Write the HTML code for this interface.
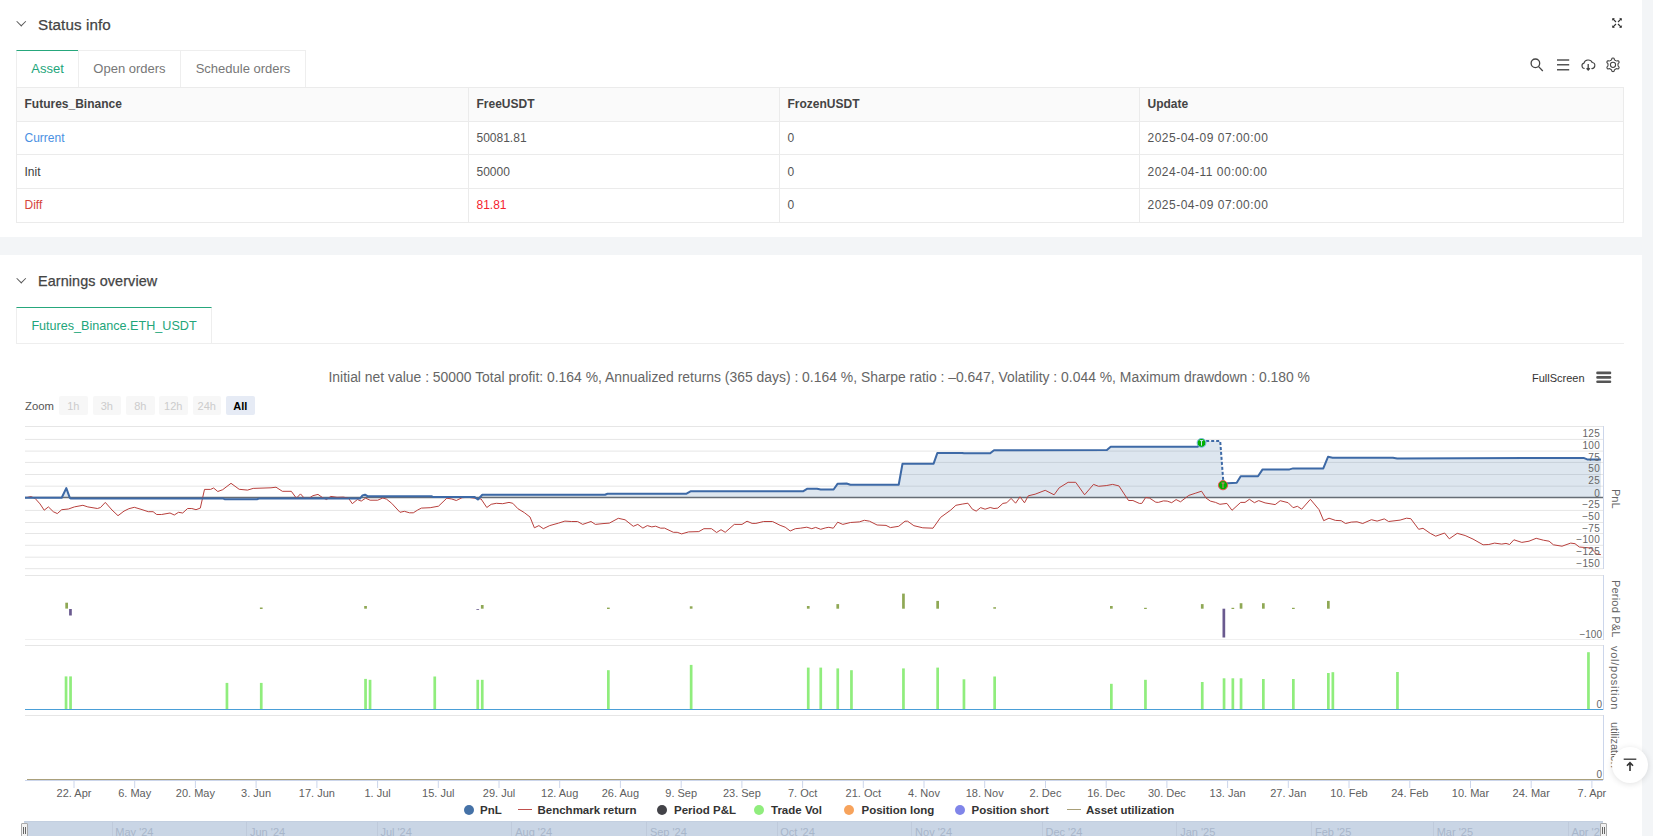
<!DOCTYPE html>
<html><head><meta charset="utf-8">
<style>
*{box-sizing:border-box;margin:0;padding:0}
html,body{width:1653px;height:836px;overflow:hidden;background:#fff;font-family:"Liberation Sans",sans-serif;position:relative}
.a{position:absolute;white-space:nowrap}
.strip{position:absolute;left:1642px;top:0;width:11px;height:836px;background:#f3f5f7}
.band{position:absolute;left:0;top:237px;width:1642px;height:18px;background:#f3f5f7}
.h{font-size:15.2px;color:#444;line-height:18px;letter-spacing:0.1px;-webkit-text-stroke:0.25px #444}
.chev{position:absolute;width:6.5px;height:6.5px;border-right:1.3px solid #555;border-bottom:1.3px solid #555;transform:rotate(45deg)}
.tab{position:absolute;top:50px;height:37px;border:1px solid #eee;border-bottom:none;font-size:13px;color:#777;text-align:center;line-height:36px}
.td{font-size:12px;line-height:14px}
.tab.on{border-top:1.5px solid #26a77c;padding-top:0.5px;color:#22a57a;line-height:34px}
table{position:absolute;left:16px;top:87px;width:1608px;border-collapse:collapse;font-size:12px;color:#555}
td,th{border:1px solid #ebebeb;height:34px;padding:0 0 0 8px;text-align:left;font-weight:normal}
th{background:#fafafa;font-weight:bold;color:#444}

.zb{position:absolute;top:396px;width:28.5px;height:19px;border-radius:2px;background:#f7f7f7;color:#ccc;font-size:11px;text-align:center;line-height:20px}
.zb.on{background:#e6ebf5;color:#000;font-weight:bold}
.rot{position:absolute;white-space:nowrap;font-size:11px;line-height:12px;color:#666;transform:rotate(90deg);transform-origin:0 0}
.lt{position:absolute;top:803px;font-size:11.5px;font-weight:bold;color:#333;line-height:14px;white-space:nowrap}
.dot{position:absolute;top:804.6px;width:10px;height:10px;border-radius:50%}
.ln{position:absolute;top:809px;width:14px;height:1.2px}
.navl{position:absolute;top:826px;font-size:11px;color:#a8b6ca;white-space:nowrap;line-height:13px}
.navs{position:absolute;top:822px;width:1px;height:14px;background:#bfcadb}
.hd{position:absolute;top:823px;width:7.5px;height:14px;background:#f2f2f2;border:1px solid #aaa;border-radius:1px}
.hd:before{content:"";position:absolute;left:1.5px;top:3px;width:1px;height:7px;background:#666;box-shadow:2px 0 0 #666}
</style></head><body>
<div class="strip"></div>
<div class="band"></div>

<!-- Section 1 -->
<div class="chev" style="left:17.5px;top:17.5px"></div>
<div class="a h" style="left:38px;top:16px">Status info</div>
<svg class="a" style="left:1608px;top:14px" width="18" height="18" viewBox="1608 14 18 18" fill="none" stroke="#333" stroke-width="1.1">
<path d="M1613 19L1616 22M1621 19L1618 22M1613 27L1616 24M1621 27L1618 24"/>
<path d="M1612.5 18.5h1.8l-1.8 1.8z M1621.5 18.5h-1.8l1.8 1.8z M1612.5 27.5h1.8l-1.8-1.8z M1621.5 27.5h-1.8l1.8-1.8z" fill="#333" stroke-width="0.6"/>
</svg>

<div class="tab on" style="left:16px;width:63px">Asset</div>
<div class="tab" style="left:78px;width:103px">Open orders</div>
<div class="tab" style="left:180px;width:126px">Schedule orders</div>

<svg class="a" style="left:1528px;top:55px" width="95" height="20" viewBox="1528 55 95 20" fill="none" stroke="#444" stroke-width="1.3">
<circle cx="1535.4" cy="63.3" r="4.3"/><path d="M1538.6 66.6L1542.8 71"/>
<path d="M1557 60h12.2M1557 64.8h12.2M1557 69.8h12.2" stroke="#555" stroke-width="1.4"/>
<path d="M1584.6 68.5a2.75 2.75 0 0 1 -0.6-5.4a4.3 3.9 0 0 1 8.2 -0.6a2.75 2.75 0 0 1 -0.8 6" stroke-width="1.15"/>
<path d="M1588.2 64v5.8M1586.6 68.2l1.6 1.8l1.6-1.8"/>
<path d="M1610.50 60.52C1610.87 60.31 1611.28 60.12 1611.54 59.76C1611.80 59.39 1611.68 58.55 1612.08 58.31C1612.48 58.07 1613.52 58.07 1613.92 58.31C1614.32 58.55 1614.20 59.39 1614.46 59.76C1614.72 60.12 1615.13 60.31 1615.50 60.52C1615.87 60.73 1616.23 60.99 1616.68 61.04C1617.13 61.08 1617.79 60.56 1618.20 60.79C1618.61 61.01 1619.13 61.91 1619.12 62.38C1619.11 62.84 1618.33 63.16 1618.14 63.57C1617.96 63.98 1618.00 64.42 1618.00 64.85C1618.00 65.28 1617.96 65.72 1618.14 66.13C1618.33 66.54 1619.11 66.86 1619.12 67.32C1619.13 67.79 1618.61 68.69 1618.20 68.91C1617.79 69.14 1617.13 68.62 1616.68 68.66C1616.23 68.71 1615.87 68.97 1615.50 69.18C1615.13 69.39 1614.72 69.58 1614.46 69.94C1614.20 70.31 1614.32 71.15 1613.92 71.39C1613.52 71.63 1612.48 71.63 1612.08 71.39C1611.68 71.15 1611.80 70.31 1611.54 69.94C1611.28 69.58 1610.87 69.39 1610.50 69.18C1610.13 68.97 1609.77 68.71 1609.32 68.66C1608.87 68.62 1608.21 69.14 1607.80 68.91C1607.39 68.69 1606.87 67.79 1606.88 67.32C1606.89 66.86 1607.67 66.54 1607.86 66.13C1608.04 65.72 1608.00 65.28 1608.00 64.85C1608.00 64.42 1608.04 63.98 1607.86 63.57C1607.67 63.16 1606.89 62.84 1606.88 62.38C1606.87 61.91 1607.39 61.01 1607.80 60.79C1608.21 60.56 1608.87 61.08 1609.32 61.04C1609.77 60.99 1610.13 60.73 1610.50 60.52Z" stroke-width="1.1"/>
<circle cx="1613" cy="64.85" r="2.6" stroke-width="1.1"/>
</svg>

<div class="a" style="left:16px;top:87px;width:1608px;height:34px;background:#fafafa"></div>
<div class="a" style="left:16px;top:87px;width:1608px;height:1px;background:#ebebeb"></div>
<div class="a" style="left:16px;top:121px;width:1608px;height:1px;background:#ebebeb"></div>
<div class="a" style="left:16px;top:154px;width:1608px;height:1px;background:#ebebeb"></div>
<div class="a" style="left:16px;top:188px;width:1608px;height:1px;background:#ebebeb"></div>
<div class="a" style="left:16px;top:222px;width:1608px;height:1px;background:#ebebeb"></div>
<div class="a" style="left:16px;top:87px;width:1px;height:136px;background:#ebebeb"></div>
<div class="a" style="left:468px;top:87px;width:1px;height:136px;background:#ebebeb"></div>
<div class="a" style="left:779px;top:87px;width:1px;height:136px;background:#ebebeb"></div>
<div class="a" style="left:1139px;top:87px;width:1px;height:136px;background:#ebebeb"></div>
<div class="a" style="left:1623px;top:87px;width:1px;height:136px;background:#ebebeb"></div>
<div class="a td" style="left:24.5px;top:97px;font-weight:bold;color:#444">Futures_Binance</div>
<div class="a td" style="left:476.5px;top:97px;font-weight:bold;color:#444">FreeUSDT</div>
<div class="a td" style="left:787.5px;top:97px;font-weight:bold;color:#444">FrozenUSDT</div>
<div class="a td" style="left:1147.5px;top:97px;font-weight:bold;color:#444">Update</div>
<div class="a td" style="left:24.5px;top:130.7px;color:#4a90e2">Current</div>
<div class="a td" style="left:476.5px;top:130.7px;color:#555">50081.81</div>
<div class="a td" style="left:787.5px;top:130.7px;color:#555">0</div>
<div class="a td" style="left:1147.5px;top:130.7px;color:#555;letter-spacing:0.5px">2025-04-09 07:00:00</div>
<div class="a td" style="left:24.5px;top:164.9px;color:#3c3c3c">Init</div>
<div class="a td" style="left:476.5px;top:164.9px;color:#555">50000</div>
<div class="a td" style="left:787.5px;top:164.9px;color:#555">0</div>
<div class="a td" style="left:1147.5px;top:164.9px;color:#555;letter-spacing:0.5px">2024-04-11 00:00:00</div>
<div class="a td" style="left:24.5px;top:197.8px;color:#d5453b">Diff</div>
<div class="a td" style="left:476.5px;top:197.8px;color:#f5222d">81.81</div>
<div class="a td" style="left:787.5px;top:197.8px;color:#555">0</div>
<div class="a td" style="left:1147.5px;top:197.8px;color:#555;letter-spacing:0.5px">2025-04-09 07:00:00</div>

<svg class="a" style="left:0;top:0" width="1653" height="836" viewBox="0 0 1653 836">
<line x1="25" y1="426.5" x2="1603" y2="426.5" stroke="#e6e6e6" stroke-width="1"/>
<line x1="25" y1="439.4" x2="1603" y2="439.4" stroke="#e6e6e6" stroke-width="1"/>
<line x1="25" y1="451.1" x2="1603" y2="451.1" stroke="#e6e6e6" stroke-width="1"/>
<line x1="25" y1="462.4" x2="1603" y2="462.4" stroke="#e6e6e6" stroke-width="1"/>
<line x1="25" y1="474.5" x2="1603" y2="474.5" stroke="#e6e6e6" stroke-width="1"/>
<line x1="25" y1="486.2" x2="1603" y2="486.2" stroke="#e6e6e6" stroke-width="1"/>
<line x1="25" y1="510.4" x2="1603" y2="510.4" stroke="#e6e6e6" stroke-width="1"/>
<line x1="25" y1="522.5" x2="1603" y2="522.5" stroke="#e6e6e6" stroke-width="1"/>
<line x1="25" y1="533.5" x2="1603" y2="533.5" stroke="#e6e6e6" stroke-width="1"/>
<line x1="25" y1="545.3" x2="1603" y2="545.3" stroke="#e6e6e6" stroke-width="1"/>
<line x1="25" y1="557.2" x2="1603" y2="557.2" stroke="#e6e6e6" stroke-width="1"/>
<line x1="25" y1="568.7" x2="1603" y2="568.7" stroke="#e6e6e6" stroke-width="1"/>
<polygon points="25.0,497.5 25.0,497.8 61.7,497.8 66.3,488.1 69.8,497.8 71.0,498.6 223.3,498.6 225.0,499.3 257.0,499.3 258.9,498.6 360.0,498.6 362.5,495.4 365.0,494.7 367.5,496.2 431.5,496.2 433.0,497.1 474.7,497.1 477.9,499.5 482.3,494.8 605.0,494.8 607.5,493.8 686.1,493.8 690.5,491.3 803.0,491.3 807.4,488.7 817.0,488.7 820.7,489.4 833.6,489.5 837.7,483.7 846.6,483.5 850.4,484.8 898.7,484.8 902.5,463.7 933.6,463.7 937.4,452.9 962.2,452.9 964.1,453.3 990.2,453.3 994.0,450.3 1106.9,450.1 1110.7,446.8 1197.7,446.8 1201.5,442.9 1207.0,441.0 1220.2,441.0 1223.2,480.3 1223.0,485.2 1227.7,483.3 1236.7,482.8 1240.7,476.3 1258.0,476.3 1262.6,469.4 1289.5,469.4 1293.1,468.4 1323.3,468.4 1328.0,456.8 1332.6,457.7 1392.9,457.7 1397.2,458.4 1583.6,457.9 1587.2,459.4 1600.8,459.4 1600.8,497.5" fill="rgba(69,114,167,0.18)"/>
<line x1="25" y1="497.5" x2="1603" y2="497.5" stroke="#666d75" stroke-width="1.5"/>
<polyline points="25.0,497.6 26.7,497.6 30.9,496.6 35.1,498.4 40.0,503.9 44.2,510.2 48.4,506.9 53.3,511.7 57.3,513.6 61.7,509.7 68.4,509.0 74.4,506.9 82.9,505.3 87.8,506.9 97.4,508.5 100.5,507.5 105.3,502.4 112.0,510.0 118.0,515.7 124.0,511.1 128.9,508.7 134.3,507.3 141.0,509.3 148.3,511.7 153.1,511.7 156.7,514.5 161.6,514.5 170.0,513.0 174.3,515.0 178.5,512.3 182.7,513.0 187.6,508.5 191.8,508.5 196.0,509.7 200.3,508.1 204.5,489.4 210.6,489.4 213.6,488.0 217.8,491.5 222.7,489.7 231.0,483.3 239.2,489.3 247.5,490.1 253.2,488.4 271.0,487.8 276.0,487.2 282.4,491.3 291.3,491.3 296.4,498.2 300.5,493.9 304.7,498.6 309.1,498.2 312.9,495.7 318.0,494.4 323.1,498.0 326.6,499.5 330.7,496.4 337.0,497.3 343.4,497.1 348.5,498.2 352.3,503.7 357.4,499.5 361.2,501.1 365.6,498.2 370.1,500.2 377.7,500.2 382.8,498.0 386.6,499.2 391.7,503.3 400.0,512.3 404.4,511.3 409.5,512.8 413.3,512.8 417.7,510.0 421.4,508.1 430.2,507.7 438.5,506.2 446.8,498.2 451.8,499.0 456.3,500.5 462.0,497.7 468.4,497.3 474.7,498.2 481.1,499.0 486.8,507.5 491.2,504.3 496.3,503.3 502.7,503.7 509.0,502.4 512.8,503.3 517.9,508.7 524.3,512.6 530.0,517.0 534.4,527.8 538.9,525.6 543.3,528.7 549.7,525.6 558.6,523.1 564.9,521.1 571.3,521.5 577.6,521.5 582.7,524.4 591.0,521.5 595.4,524.4 603.0,523.6 609.4,523.1 618.3,518.3 625.1,519.8 633.3,526.3 637.8,524.4 642.9,528.1 647.3,525.6 651.8,526.9 655.6,526.2 660.7,528.2 664.5,528.1 673.4,532.3 677.2,532.3 681.6,533.9 688.6,531.9 698.8,531.6 703.9,528.7 711.5,528.7 716.6,532.5 721.0,529.7 725.2,532.3 734.3,524.4 742.0,524.4 747.0,521.2 752.1,523.4 755.9,523.4 763.6,521.5 772.5,521.5 780.1,525.3 785.2,527.2 790.2,531.0 795.3,528.7 800.4,528.2 806.8,527.2 811.8,528.7 815.7,527.4 820.7,529.3 825.8,527.8 828.8,527.3 833.3,528.2 837.7,522.2 842.8,524.4 850.4,522.5 859.3,521.9 864.4,520.3 869.5,521.2 877.1,525.0 886.0,525.4 890.4,527.6 898.7,526.3 905.0,521.2 907.6,521.2 913.9,525.7 922.8,527.8 933.0,528.2 940.6,517.4 950.8,510.0 955.9,505.3 962.2,504.1 967.9,503.2 972.4,509.2 976.2,511.1 980.6,507.6 985.1,509.2 990.2,507.5 994.0,508.5 997.8,508.1 1002.9,503.4 1006.7,502.8 1011.1,498.4 1015.6,503.2 1020.0,496.8 1024.5,502.8 1028.3,495.8 1035.1,494.2 1045.2,490.3 1054.1,494.8 1059.2,487.8 1068.1,482.3 1075.7,482.3 1084.6,494.8 1093.5,484.4 1098.6,486.3 1106.2,485.6 1112.6,484.4 1118.9,485.9 1128.5,500.5 1132.9,500.5 1139.3,503.4 1141.8,503.4 1145.6,497.6 1149.4,498.0 1155.8,502.2 1158.3,502.4 1163.4,500.9 1167.2,501.1 1171.7,502.7 1176.1,499.6 1180.5,501.8 1188.8,495.4 1195.2,493.3 1201.5,491.2 1206.0,498.0 1210.4,501.1 1215.5,502.4 1219.9,504.3 1226.9,503.4 1232.0,510.3 1240.7,502.4 1245.0,502.4 1249.4,499.3 1254.4,502.7 1258.7,500.6 1265.1,502.9 1275.2,504.6 1280.2,500.7 1288.1,502.7 1293.1,507.7 1297.4,506.3 1301.7,509.2 1310.4,499.3 1319.0,509.6 1323.7,520.7 1329.0,518.2 1335.5,520.4 1341.2,520.7 1345.5,523.5 1351.3,522.1 1357.0,521.8 1362.7,523.5 1371.4,519.7 1377.1,521.1 1384.3,518.9 1388.6,521.5 1400.1,520.1 1406.5,518.2 1410.8,518.7 1418.7,529.3 1423.0,528.3 1430.2,533.3 1435.7,536.2 1444.6,533.0 1449.3,538.8 1457.2,533.3 1465.1,535.5 1473.0,539.1 1483.1,544.8 1488.8,544.5 1494.6,543.1 1501.7,544.1 1506.0,543.4 1509.6,544.5 1513.9,539.8 1521.8,542.4 1529.0,541.2 1536.2,538.3 1543.4,540.2 1549.1,541.2 1553.4,544.8 1562.0,546.2 1570.7,543.1 1575.0,543.7 1579.3,547.0 1590.8,548.0 1596.5,554.1 1600.8,554.6" fill="none" stroke="#b8403d" stroke-width="1" stroke-linejoin="round"/>
<polyline points="25.0,497.8 61.7,497.8 66.3,488.1 69.8,497.8 71.0,498.6 223.3,498.6 225.0,499.3 257.0,499.3 258.9,498.6 360.0,498.6 362.5,495.4 365.0,494.7 367.5,496.2 431.5,496.2 433.0,497.1 474.7,497.1 477.9,499.5 482.3,494.8 605.0,494.8 607.5,493.8 686.1,493.8 690.5,491.3 803.0,491.3 807.4,488.7 817.0,488.7 820.7,489.4 833.6,489.5 837.7,483.7 846.6,483.5 850.4,484.8 898.7,484.8 902.5,463.7 933.6,463.7 937.4,452.9 962.2,452.9 964.1,453.3 990.2,453.3 994.0,450.3 1106.9,450.1 1110.7,446.8 1197.7,446.8 1201.5,442.9" fill="none" stroke="#3d69a6" stroke-width="2" stroke-linejoin="round"/>
<polyline points="1223.0,485.2 1227.7,483.3 1236.7,482.8 1240.7,476.3 1258.0,476.3 1262.6,469.4 1289.5,469.4 1293.1,468.4 1323.3,468.4 1328.0,456.8 1332.6,457.7 1392.9,457.7 1397.2,458.4 1583.6,457.9 1587.2,459.4 1600.8,459.4" fill="none" stroke="#3d69a6" stroke-width="2" stroke-linejoin="round"/>
<polyline points="1201.5,442.9 1207.0,441.0 1220.2,441.0 1223.2,480.3" fill="none" stroke="#3d69a6" stroke-width="2" stroke-dasharray="3,2"/>
<circle cx="1201.5" cy="442.9" r="4.4" fill="#00b000" stroke="#7cb5ec" stroke-width="1"/>
<path d="M1199.8 440.6h3.4M1201.5 440.6v5" stroke="#cfe3f5" stroke-width="1"/>
<circle cx="1223" cy="485.2" r="4.6" fill="#00b000" stroke="#f25050" stroke-width="1"/>
<path d="M1221.5 483h3M1223 483v5" stroke="#e08080" stroke-width="1"/>
<line x1="1603.5" y1="426" x2="1603.5" y2="569" stroke="#ccd6eb" stroke-width="1"/>
<text x="1600" y="437.0" text-anchor="end" font-size="10" letter-spacing="0.3" fill="#666">125</text>
<text x="1600" y="448.9" text-anchor="end" font-size="10" letter-spacing="0.3" fill="#666">100</text>
<text x="1600" y="460.6" text-anchor="end" font-size="10" letter-spacing="0.3" fill="#666">75</text>
<text x="1600" y="472.4" text-anchor="end" font-size="10" letter-spacing="0.3" fill="#666">50</text>
<text x="1600" y="484.1" text-anchor="end" font-size="10" letter-spacing="0.3" fill="#666">25</text>
<text x="1600" y="497.0" text-anchor="end" font-size="10" letter-spacing="0.3" fill="#666">0</text>
<text x="1600" y="508.1" text-anchor="end" font-size="10" letter-spacing="0.3" fill="#666">−25</text>
<text x="1600" y="520.1" text-anchor="end" font-size="10" letter-spacing="0.3" fill="#666">−50</text>
<text x="1600" y="532.1" text-anchor="end" font-size="10" letter-spacing="0.3" fill="#666">−75</text>
<text x="1600" y="543.1" text-anchor="end" font-size="10" letter-spacing="0.3" fill="#666">−100</text>
<text x="1600" y="555.1" text-anchor="end" font-size="10" letter-spacing="0.3" fill="#666">−125</text>
<text x="1600" y="566.9" text-anchor="end" font-size="10" letter-spacing="0.3" fill="#666">−150</text>
<line x1="25" y1="575.5" x2="1603" y2="575.5" stroke="#e6e6e6"/>
<line x1="25" y1="639.5" x2="1603" y2="639.5" stroke="#f0f0f0"/>
<line x1="1603.5" y1="575" x2="1603.5" y2="640" stroke="#ccd6eb"/>
<text x="1602" y="638" text-anchor="end" font-size="10" fill="#666">−100</text>
<line x1="25" y1="645.5" x2="1603" y2="645.5" stroke="#e6e6e6"/>
<line x1="1603.5" y1="645" x2="1603.5" y2="710" stroke="#ccd6eb"/>
<text x="1602" y="708" text-anchor="end" font-size="10" fill="#666">0</text>
<line x1="25" y1="715.5" x2="1603" y2="715.5" stroke="#e6e6e6"/>
<line x1="1603.5" y1="715" x2="1603.5" y2="780" stroke="#ccd6eb"/>
<text x="1602" y="778" text-anchor="end" font-size="10" fill="#666">0</text>
<line x1="25" y1="780.5" x2="1603" y2="780.5" stroke="#ccd6eb"/>
<line x1="27" y1="779.5" x2="1603" y2="779.5" stroke="#aaa07c" stroke-width="1.2"/>
<rect x="64.7" y="676.4" width="2.7" height="33.1" fill="#90ed7d"/>
<rect x="69.2" y="676.4" width="2.7" height="33.1" fill="#90ed7d"/>
<rect x="225.6" y="682.9" width="2.7" height="26.6" fill="#90ed7d"/>
<rect x="259.9" y="682.9" width="2.7" height="26.6" fill="#90ed7d"/>
<rect x="364.2" y="678.9" width="2.7" height="30.6" fill="#90ed7d"/>
<rect x="368.7" y="679.8" width="2.7" height="29.7" fill="#90ed7d"/>
<rect x="433.4" y="676.5" width="2.7" height="33.0" fill="#90ed7d"/>
<rect x="476.4" y="679.8" width="2.7" height="29.7" fill="#90ed7d"/>
<rect x="480.9" y="679.8" width="2.7" height="29.7" fill="#90ed7d"/>
<rect x="607.0" y="670.2" width="2.7" height="39.3" fill="#90ed7d"/>
<rect x="689.8" y="664.9" width="2.7" height="44.6" fill="#90ed7d"/>
<rect x="806.9" y="667.6" width="2.7" height="41.9" fill="#90ed7d"/>
<rect x="819.4" y="667.6" width="2.7" height="41.9" fill="#90ed7d"/>
<rect x="836.4" y="668.4" width="2.7" height="41.1" fill="#90ed7d"/>
<rect x="850.1" y="670.2" width="2.7" height="39.3" fill="#90ed7d"/>
<rect x="902.1" y="668.4" width="2.7" height="41.1" fill="#90ed7d"/>
<rect x="936.3" y="667.6" width="2.7" height="41.9" fill="#90ed7d"/>
<rect x="962.6" y="679.3" width="2.7" height="30.2" fill="#90ed7d"/>
<rect x="993.3" y="676.5" width="2.7" height="33.0" fill="#90ed7d"/>
<rect x="1110.0" y="683.8" width="2.7" height="25.7" fill="#90ed7d"/>
<rect x="1144.1" y="679.8" width="2.7" height="29.7" fill="#90ed7d"/>
<rect x="1200.9" y="682.0" width="2.7" height="27.5" fill="#90ed7d"/>
<rect x="1222.7" y="678.3" width="2.7" height="31.2" fill="#90ed7d"/>
<rect x="1231.5" y="678.3" width="2.7" height="31.2" fill="#90ed7d"/>
<rect x="1239.7" y="678.3" width="2.7" height="31.2" fill="#90ed7d"/>
<rect x="1262.0" y="679.0" width="2.7" height="30.5" fill="#90ed7d"/>
<rect x="1292.0" y="679.0" width="2.7" height="30.5" fill="#90ed7d"/>
<rect x="1327.0" y="673.0" width="2.7" height="36.5" fill="#90ed7d"/>
<rect x="1331.5" y="672.2" width="2.7" height="37.3" fill="#90ed7d"/>
<rect x="1396.1" y="672.0" width="2.7" height="37.5" fill="#90ed7d"/>
<rect x="1587.1" y="652.2" width="2.7" height="57.3" fill="#90ed7d"/>
<line x1="25" y1="709.5" x2="1603" y2="709.5" stroke="#4a9fd8" stroke-width="1.2"/>
<rect x="65.3" y="602.7" width="2.7" height="5.9" fill="#8fa855"/>
<rect x="69.1" y="609.0" width="2.7" height="6.5" fill="#6a5a8f"/>
<rect x="259.9" y="607.5" width="2.7" height="1.5" fill="#8fa855"/>
<rect x="364.2" y="606.0" width="2.7" height="2.7" fill="#8fa855"/>
<rect x="476.4" y="609.0" width="2.7" height="0.8" fill="#6a5a8f"/>
<rect x="480.9" y="605.0" width="2.7" height="3.7" fill="#8fa855"/>
<rect x="607.0" y="607.6" width="2.7" height="1.4" fill="#8fa855"/>
<rect x="689.8" y="606.3" width="2.7" height="2.4" fill="#8fa855"/>
<rect x="806.9" y="606.0" width="2.7" height="2.7" fill="#8fa855"/>
<rect x="836.4" y="604.1" width="2.7" height="4.6" fill="#8fa855"/>
<rect x="902.1" y="593.6" width="2.7" height="15.1" fill="#8fa855"/>
<rect x="936.3" y="600.9" width="2.7" height="7.8" fill="#8fa855"/>
<rect x="993.3" y="607.2" width="2.7" height="1.5" fill="#8fa855"/>
<rect x="1110.0" y="606.0" width="2.7" height="2.7" fill="#8fa855"/>
<rect x="1144.1" y="607.8" width="2.7" height="1.2" fill="#8fa855"/>
<rect x="1200.9" y="604.1" width="2.7" height="4.6" fill="#8fa855"/>
<rect x="1222.5" y="608.7" width="2.7" height="28.8" fill="#6a5a8f"/>
<rect x="1231.5" y="607.8" width="2.7" height="1.2" fill="#8fa855"/>
<rect x="1239.7" y="603.2" width="2.7" height="5.5" fill="#8fa855"/>
<rect x="1262.0" y="603.2" width="2.7" height="5.5" fill="#8fa855"/>
<rect x="1292.0" y="607.8" width="2.7" height="1.2" fill="#8fa855"/>
<rect x="1327.0" y="600.9" width="2.7" height="7.8" fill="#8fa855"/>
<line x1="74.0" y1="780" x2="74.0" y2="788" stroke="#ccd6eb"/>
<text x="74.0" y="797" text-anchor="middle" font-size="11" fill="#606060">22. Apr</text>
<line x1="134.7" y1="780" x2="134.7" y2="788" stroke="#ccd6eb"/>
<text x="134.7" y="797" text-anchor="middle" font-size="11" fill="#606060">6. May</text>
<line x1="195.4" y1="780" x2="195.4" y2="788" stroke="#ccd6eb"/>
<text x="195.4" y="797" text-anchor="middle" font-size="11" fill="#606060">20. May</text>
<line x1="256.1" y1="780" x2="256.1" y2="788" stroke="#ccd6eb"/>
<text x="256.1" y="797" text-anchor="middle" font-size="11" fill="#606060">3. Jun</text>
<line x1="316.9" y1="780" x2="316.9" y2="788" stroke="#ccd6eb"/>
<text x="316.9" y="797" text-anchor="middle" font-size="11" fill="#606060">17. Jun</text>
<line x1="377.6" y1="780" x2="377.6" y2="788" stroke="#ccd6eb"/>
<text x="377.6" y="797" text-anchor="middle" font-size="11" fill="#606060">1. Jul</text>
<line x1="438.3" y1="780" x2="438.3" y2="788" stroke="#ccd6eb"/>
<text x="438.3" y="797" text-anchor="middle" font-size="11" fill="#606060">15. Jul</text>
<line x1="499.0" y1="780" x2="499.0" y2="788" stroke="#ccd6eb"/>
<text x="499.0" y="797" text-anchor="middle" font-size="11" fill="#606060">29. Jul</text>
<line x1="559.7" y1="780" x2="559.7" y2="788" stroke="#ccd6eb"/>
<text x="559.7" y="797" text-anchor="middle" font-size="11" fill="#606060">12. Aug</text>
<line x1="620.4" y1="780" x2="620.4" y2="788" stroke="#ccd6eb"/>
<text x="620.4" y="797" text-anchor="middle" font-size="11" fill="#606060">26. Aug</text>
<line x1="681.2" y1="780" x2="681.2" y2="788" stroke="#ccd6eb"/>
<text x="681.2" y="797" text-anchor="middle" font-size="11" fill="#606060">9. Sep</text>
<line x1="741.9" y1="780" x2="741.9" y2="788" stroke="#ccd6eb"/>
<text x="741.9" y="797" text-anchor="middle" font-size="11" fill="#606060">23. Sep</text>
<line x1="802.6" y1="780" x2="802.6" y2="788" stroke="#ccd6eb"/>
<text x="802.6" y="797" text-anchor="middle" font-size="11" fill="#606060">7. Oct</text>
<line x1="863.3" y1="780" x2="863.3" y2="788" stroke="#ccd6eb"/>
<text x="863.3" y="797" text-anchor="middle" font-size="11" fill="#606060">21. Oct</text>
<line x1="924.0" y1="780" x2="924.0" y2="788" stroke="#ccd6eb"/>
<text x="924.0" y="797" text-anchor="middle" font-size="11" fill="#606060">4. Nov</text>
<line x1="984.7" y1="780" x2="984.7" y2="788" stroke="#ccd6eb"/>
<text x="984.7" y="797" text-anchor="middle" font-size="11" fill="#606060">18. Nov</text>
<line x1="1045.5" y1="780" x2="1045.5" y2="788" stroke="#ccd6eb"/>
<text x="1045.5" y="797" text-anchor="middle" font-size="11" fill="#606060">2. Dec</text>
<line x1="1106.2" y1="780" x2="1106.2" y2="788" stroke="#ccd6eb"/>
<text x="1106.2" y="797" text-anchor="middle" font-size="11" fill="#606060">16. Dec</text>
<line x1="1166.9" y1="780" x2="1166.9" y2="788" stroke="#ccd6eb"/>
<text x="1166.9" y="797" text-anchor="middle" font-size="11" fill="#606060">30. Dec</text>
<line x1="1227.6" y1="780" x2="1227.6" y2="788" stroke="#ccd6eb"/>
<text x="1227.6" y="797" text-anchor="middle" font-size="11" fill="#606060">13. Jan</text>
<line x1="1288.3" y1="780" x2="1288.3" y2="788" stroke="#ccd6eb"/>
<text x="1288.3" y="797" text-anchor="middle" font-size="11" fill="#606060">27. Jan</text>
<line x1="1349.0" y1="780" x2="1349.0" y2="788" stroke="#ccd6eb"/>
<text x="1349.0" y="797" text-anchor="middle" font-size="11" fill="#606060">10. Feb</text>
<line x1="1409.8" y1="780" x2="1409.8" y2="788" stroke="#ccd6eb"/>
<text x="1409.8" y="797" text-anchor="middle" font-size="11" fill="#606060">24. Feb</text>
<line x1="1470.5" y1="780" x2="1470.5" y2="788" stroke="#ccd6eb"/>
<text x="1470.5" y="797" text-anchor="middle" font-size="11" fill="#606060">10. Mar</text>
<line x1="1531.2" y1="780" x2="1531.2" y2="788" stroke="#ccd6eb"/>
<text x="1531.2" y="797" text-anchor="middle" font-size="11" fill="#606060">24. Mar</text>
<line x1="1591.9" y1="780" x2="1591.9" y2="788" stroke="#ccd6eb"/>
<text x="1591.9" y="797" text-anchor="middle" font-size="11" fill="#606060">7. Apr</text>
</svg>
<!-- Section 2 -->
<div class="chev" style="left:17.5px;top:274.5px"></div>
<div class="a h" style="left:38px;top:272.3px;font-size:14.4px">Earnings overview</div>
<div class="tab on" style="left:16px;top:307px;width:196px;height:36px;font-size:12.6px">Futures_Binance.ETH_USDT</div>
<div class="a" style="left:16px;top:343px;width:1608px;height:1px;background:#eee"></div>

<div class="a" style="left:328.5px;top:368.5px;font-size:13.91px;color:#666;line-height:17px">Initial net value : 50000 Total profit: 0.164 %, Annualized returns (365 days) : 0.164 %, Sharpe ratio : –0.647, Volatility : 0.044 %, Maximum drawdown : 0.180 %</div>
<div class="a" style="left:1532px;top:372px;font-size:11px;color:#333;line-height:13px">FullScreen</div>
<svg class="a" style="left:1595px;top:370px" width="18" height="15"><path d="M2.5 2.9h12.5M2.5 7.4h12.5M2.5 11.8h12.5" stroke="#555" stroke-width="2.6" stroke-linecap="round"/></svg>

<div class="a" style="left:25px;top:400px;font-size:11.3px;color:#555;line-height:13px">Zoom</div>


<!-- zoom buttons -->
<div class="zb" style="left:59px">1h</div>
<div class="zb" style="left:92.5px">3h</div>
<div class="zb" style="left:126px">8h</div>
<div class="zb" style="left:159px">12h</div>
<div class="zb" style="left:192.5px">24h</div>
<div class="zb on" style="left:226px">All</div>

<!-- rotated axis titles -->
<div class="rot" style="left:1622px;top:489px">PnL</div>
<div class="rot" style="left:1622px;top:580px;letter-spacing:0.2px">Period P&amp;L</div>
<div class="rot" style="left:1621px;top:646px;letter-spacing:0.75px">vol/position</div>
<div class="rot" style="left:1621px;top:722px;height:13px;width:53px;overflow:hidden">utilization</div>

<!-- scroll top -->
<div class="a" style="left:1612px;top:747px;width:36px;height:36px;border-radius:50%;background:#fff;box-shadow:0 1px 6px rgba(0,0,0,0.12)"></div>
<svg class="a" style="left:1620px;top:755px" width="20" height="20"><path d="M3.7 4.2h12.6" stroke="#333" stroke-width="1.3"/><path d="M10 16V8M7 10.8L10 7.6L13 10.8" stroke="#333" stroke-width="1.6" fill="none"/></svg>

<!-- legend -->
<div class="lg" style="left:0;top:0">
<span class="dot" style="left:463.6px;background:#4572a7"></span><span class="lt" style="left:480px">PnL</span>
<span class="ln" style="left:518px;background:#c0504d"></span><span class="lt" style="left:537.5px">Benchmark return</span>
<span class="dot" style="left:657.2px;background:#434348"></span><span class="lt" style="left:674px">Period P&amp;L</span>
<span class="dot" style="left:753.5px;background:#90ed7d"></span><span class="lt" style="left:771px">Trade Vol</span>
<span class="dot" style="left:844.1px;background:#f7a35c"></span><span class="lt" style="left:861.5px">Position long</span>
<span class="dot" style="left:954.6px;background:#8085e9"></span><span class="lt" style="left:971.5px">Position short</span>
<span class="ln" style="left:1067px;background:#a89f78"></span><span class="lt" style="left:1086px">Asset utilization</span>
</div>

<!-- navigator -->
<div class="a" style="left:24px;top:821px;width:1579px;height:15px;background:#c9d5e5;border-top:1px solid #c3cfe0"></div>
<div class="navs" style="left:111.5px"></div><div class="navl" style="left:115.3px">May '24</div>
<div class="navs" style="left:246.2px"></div><div class="navl" style="left:250.0px">Jun '24</div>
<div class="navs" style="left:376.6px"></div><div class="navl" style="left:380.4px">Jul '24</div>
<div class="navs" style="left:511.4px"></div><div class="navl" style="left:515.2px">Aug '24</div>
<div class="navs" style="left:646.1px"></div><div class="navl" style="left:649.9px">Sep '24</div>
<div class="navs" style="left:776.5px"></div><div class="navl" style="left:780.3px">Oct '24</div>
<div class="navs" style="left:911.3px"></div><div class="navl" style="left:915.1px">Nov '24</div>
<div class="navs" style="left:1041.7px"></div><div class="navl" style="left:1045.5px">Dec '24</div>
<div class="navs" style="left:1176.4px"></div><div class="navl" style="left:1180.2px">Jan '25</div>
<div class="navs" style="left:1311.2px"></div><div class="navl" style="left:1315.0px">Feb '25</div>
<div class="navs" style="left:1432.9px"></div><div class="navl" style="left:1436.7px">Mar '25</div>
<div class="navs" style="left:1567.6px"></div><div class="navl" style="left:1571.4px">Apr '25</div>
<div class="hd" style="left:20.5px"></div>
<div class="hd" style="left:1599.5px"></div>
</body></html>
